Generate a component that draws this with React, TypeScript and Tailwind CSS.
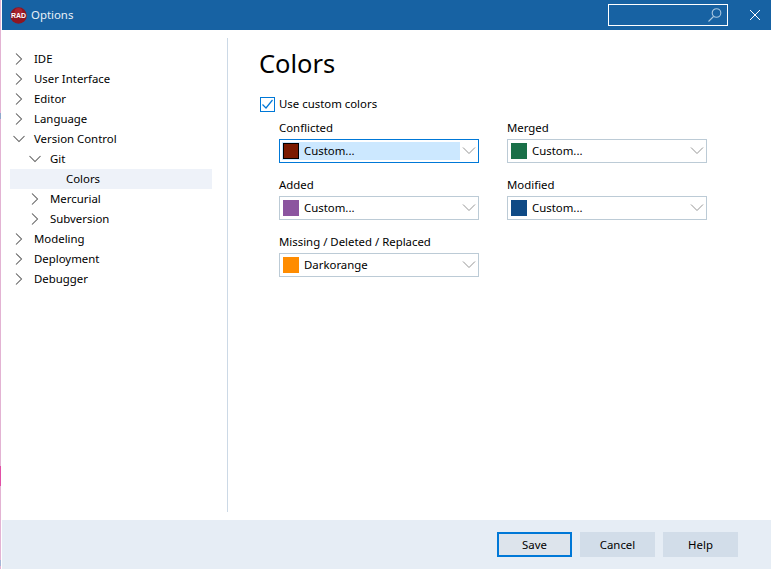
import React from "react";

const font = { fontFamily: '"Noto Sans", sans-serif' };

function Chevron({ open }: { open: boolean }) {
  return (
    <svg width="16" height="16" viewBox="0 0 16 16" fill="none" stroke="#5c5c5c" strokeWidth="1.05" className="shrink-0">
      {open ? <path d="M2.5 5 L8 10.5 L13.5 5" /> : <path d="M5 2.5 L10.5 8 L5 13.5" />}
    </svg>
  );
}

function TreeRow({ label, level, state, selected }: { label: string; level: number; state?: "open" | "closed"; selected?: boolean }) {
  const pad = level === 0 ? "pl-[0px]" : level === 1 ? "pl-[16px]" : "pl-[32px]";
  return (
    <div className={`h-5 flex items-center ${pad} ${selected ? "bg-[#eef2f9]" : ""}`}>
      <div className="w-[24px] flex justify-start pl-[1px] shrink-0">
        {state ? <Chevron open={state === "open"} /> : null}
      </div>
      <span className="text-[11.4px] leading-5 text-black">{label}</span>
    </div>
  );
}

function Combo({ label, color, value, focused, border }: { label: string; color: string; value: string; focused?: boolean; border?: boolean }) {
  return (
    <div className="w-[200px]">
      <div className="h-[22px] text-[11.4px] leading-[22px] text-black">{label}</div>
      <div className={`h-6 border flex items-center ${focused ? "border-[#0078d7]" : "border-[#bccbd6]"}`}>
        <div className={`h-[18px] ml-[2px] flex items-center w-[178px] ${focused ? "bg-[#cce8ff]" : ""}`}>
          <div className={`w-4 h-4 ml-[1px] shrink-0 ${border ? "border border-black" : ""}`} style={{ backgroundColor: color }} />
          <span className="ml-[5px] text-[11.4px] text-black">{value}</span>
        </div>
        <svg width="16" height="10" viewBox="0 0 16 10" fill="none" stroke="#959595" strokeWidth="1" className="ml-auto mr-[1px]">
          <path d="M2 1.5 L8 7.5 L14 1.5" />
        </svg>
      </div>
    </div>
  );
}

function Btn({ label, focused }: { label: string; focused?: boolean }) {
  return (
    <div className={`w-[75px] h-[25px] flex items-center justify-center text-[11.4px] text-black ${focused ? "bg-[#dde4ec] border-2 border-[#0078d7]" : "bg-[#d2dde9]"}`}>
      {label}
    </div>
  );
}

export default function App() {
  return (
    <div className="w-[771px] h-[569px] flex overflow-hidden bg-white" style={font}>
      <div className="w-[1px] h-full flex flex-col shrink-0">
        <div className="h-[113px] bg-[#e3b3d3]" />
        <div className="h-[6px] bg-[#8fa8cc]" />
        <div className="h-[347px] bg-[#e3b3d3]" />
        <div className="h-[20px] bg-[#e14fa6]" />
        <div className="h-[74px] bg-[#e3b3d3]" />
        <div className="h-[6px] bg-[#a5b5d5]" />
        <div className="flex-1 bg-[#e3b3d3]" />
      </div>
      <div className="w-[1px] bg-white shrink-0" />
      <div className="flex-1 flex flex-col min-w-0">
        <div className="h-[30px] bg-[#1762a3] flex items-center shrink-0">
          <svg width="17" height="17" viewBox="0 0 17 17" className="ml-[8px] shrink-0">
            <circle cx="8.5" cy="8.5" r="8.3" fill="#8e1622" />
            <circle cx="8.5" cy="5" r="4" fill="#b52a34" opacity="0.7" />
            <text x="8.5" y="11.2" textAnchor="middle" fontSize="8" fontWeight="700" fill="#fff" textLength="15" lengthAdjust="spacingAndGlyphs" fontFamily="Liberation Sans, sans-serif">RAD</text>
          </svg>
          <span className="ml-[4px] text-[11.4px] text-[#e8f0f7]">Options</span>
          <div className="ml-auto w-[120px] h-[22px] border border-white flex items-center justify-end pr-[5px]">
            <svg width="15" height="16" viewBox="0 0 15 16" fill="none" stroke="#a9c8e2" strokeWidth="1.1">
              <circle cx="9.5" cy="6" r="4.3" />
              <path d="M6.5 9.5 L1.5 14.5" />
            </svg>
          </div>
          <svg width="12" height="12" viewBox="0 0 12 12" fill="none" stroke="#ffffff" strokeWidth="1" className="ml-[21px] mr-[10px]">
            <path d="M1 1 L11 11 M11 1 L1 11" />
          </svg>
        </div>
        <div className="flex-1 flex min-h-0 pt-[8px] pb-[8px]">
          <div className="w-[226px] shrink-0 border-r border-[#ccd9e6] pl-[8px] pr-[15px] pt-[11px]">
            <TreeRow label="IDE" level={0} state="closed" />
            <TreeRow label="User Interface" level={0} state="closed" />
            <TreeRow label="Editor" level={0} state="closed" />
            <TreeRow label="Language" level={0} state="closed" />
            <TreeRow label="Version Control" level={0} state="open" />
            <TreeRow label="Git" level={1} state="open" />
            <TreeRow label="Colors" level={2} selected />
            <TreeRow label="Mercurial" level={1} state="closed" />
            <TreeRow label="Subversion" level={1} state="closed" />
            <TreeRow label="Modeling" level={0} state="closed" />
            <TreeRow label="Deployment" level={0} state="closed" />
            <TreeRow label="Debugger" level={0} state="closed" />
          </div>
          <div className="flex-1 pl-[31px] pt-[7px]">
            <div className="text-[25.5px] leading-[36px] text-black h-[48px]">Colors</div>
            <div className="h-[18px] mt-[2px] flex items-center">
              <div className="w-[15px] h-[15px] border border-[#0078d7] flex items-center justify-center ml-[1px]">
                <svg width="13" height="13" viewBox="0 0 13 13" fill="none" stroke="#0078d7" strokeWidth="1.2">
                  <path d="M1.5 6.5 L5 10 L11.5 2" />
                </svg>
              </div>
              <span className="ml-[4px] text-[11.4px] text-black">Use custom colors</span>
            </div>
            <div className="pl-[20px] mt-[4px] grid grid-cols-[200px_200px] gap-x-[28px] gap-y-[11px] items-start">
              <Combo label="Conflicted" color="#7b1a00" value="Custom..." focused border />
              <Combo label="Merged" color="#1a7048" value="Custom..." />
              <Combo label="Added" color="#8c549f" value="Custom..." />
              <Combo label="Modified" color="#0f4a85" value="Custom..." />
              <Combo label="Missing / Deleted / Replaced" color="#ff8c00" value="Darkorange" />
            </div>
          </div>
        </div>
        <div className="h-[49px] shrink-0 bg-[#e6edf5] flex items-center justify-end gap-[8px] pr-[33px]">
          <Btn label="Save" focused />
          <Btn label="Cancel" />
          <Btn label="Help" />
        </div>
      </div>
    </div>
  );
}
